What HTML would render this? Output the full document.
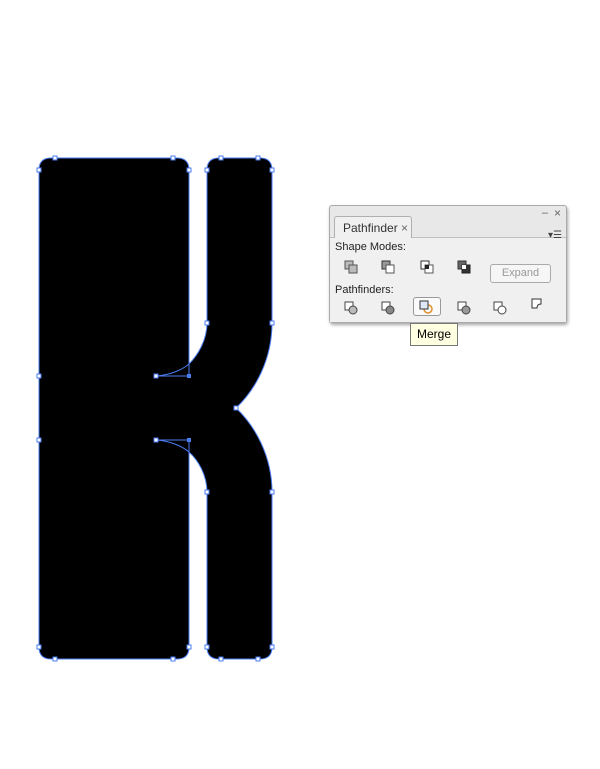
<!DOCTYPE html>
<html><head><style>
body{margin:0;width:600px;height:769px;background:#fff;position:relative;overflow:hidden;font-family:"Liberation Sans",sans-serif}
.panel{position:absolute;left:329px;top:205px;width:236px;height:116px;background:#e8e8e8;border:1px solid #aaa;border-radius:3px;box-shadow:1px 2px 3px rgba(0,0,0,.35)}
.tab{position:absolute;left:4px;top:10px;width:78px;height:22px;background:#f0f0f0;border:1px solid #b0b0b0;border-bottom:none;border-radius:3px 3px 0 0;font-size:12px;color:#333;line-height:22px;padding-left:8px;box-sizing:border-box}
.body{position:absolute;left:0;top:31px;right:0;bottom:0;background:#f0f0f0;border-top:1px solid #c0c0c0}
.lbl{position:absolute;left:5px;font-size:11px;color:#222}
.ic{position:absolute;width:14px;height:14px}
.btn{position:absolute;left:160px;top:26px;width:59px;height:17px;border:1px solid #aaa;border-radius:3px;background:#f6f6f6;font-size:11px;color:#999;text-align:center;line-height:17px}
.tip{position:absolute;left:410px;top:323px;width:46px;height:21px;background:#ffffe1;border:1px solid #777;font-size:12px;line-height:21px;text-align:center;color:#000}
</style></head><body>
<svg width="600" height="769" style="position:absolute;left:0;top:0">
<path d="M51,158 L177,158 Q189,158 189,170 L189,364 C198,355 207,340 207,323 L207,170 Q207,158 219,158 L260,158 Q272,158 272,170 L272,323 C272,360 255,390 236,408 C255,426 272,456 272,492 L272,647 Q272,659 260,659 L219,659 Q207,659 207,647 L207,492 C207,475 198,460 189,452 L189,647 Q189,659 177,659 L51,659 Q39,659 39,647 L39,170 Q39,158 51,158 Z" fill="#000" stroke="#4a7cf0" stroke-width="1"/>
<g stroke="#4a7cf0" stroke-width="1" fill="none">
<line x1="156" y1="376" x2="189" y2="376"/><line x1="189" y1="376" x2="189" y2="364"/><path d="M156,376 C170,375 182,370 189,364"/>
<line x1="156" y1="440" x2="189" y2="440"/><line x1="189" y1="440" x2="189" y2="452"/><path d="M156,440 C170,441 182,446 189,452"/>
</g>
<g fill="#fff" stroke="#4a7cf0" stroke-width="1">
<rect x="53" y="156" width="4" height="4"/><rect x="171" y="156" width="4" height="4"/><rect x="37" y="168" width="4" height="4"/><rect x="187" y="168" width="4" height="4"/>
<rect x="219" y="156" width="4" height="4"/><rect x="256" y="156" width="4" height="4"/><rect x="205" y="168" width="4" height="4"/><rect x="270" y="168" width="4" height="4"/>
<rect x="205" y="321" width="4" height="4"/><rect x="270" y="321" width="4" height="4"/><rect x="234" y="406" width="4" height="4"/>
<rect x="205" y="490" width="4" height="4"/><rect x="270" y="490" width="4" height="4"/>
<rect x="37" y="374" width="4" height="4"/><rect x="37" y="438" width="4" height="4"/>
<rect x="154" y="374" width="4" height="4"/><rect x="154" y="438" width="4" height="4"/>
<rect x="37" y="645" width="4" height="4"/><rect x="187" y="645" width="4" height="4"/><rect x="53" y="657" width="4" height="4"/><rect x="171" y="657" width="4" height="4"/>
<rect x="205" y="645" width="4" height="4"/><rect x="270" y="645" width="4" height="4"/><rect x="219" y="657" width="4" height="4"/><rect x="256" y="657" width="4" height="4"/>
</g>
<g fill="#4a7cf0"><rect x="187" y="374" width="4" height="4"/><rect x="187" y="438" width="4" height="4"/></g>
</svg>
<div class="panel">
<div style="position:absolute;right:18px;top:1px;font-size:11px;color:#666">–</div>
<div style="position:absolute;right:5px;top:0px;font-size:12px;color:#666">×</div>
<div class="body">
<div style="position:absolute;right:4px;top:-8px;font-size:10px;color:#444">▾☰</div>
<div class="lbl" style="top:3px">Shape Modes:</div>
<svg class="ic" style="left:14px;top:22px"><rect x="1" y="1" width="8" height="8" fill="#bbb" stroke="#555"/><rect x="5" y="5" width="8" height="8" fill="#bbb" stroke="#555"/></svg>
<svg class="ic" style="left:51px;top:22px"><rect x="1" y="1" width="8" height="8" fill="#999" stroke="#333"/><rect x="5" y="5" width="8" height="8" fill="#fff" stroke="#555"/></svg>
<svg class="ic" style="left:90px;top:22px"><rect x="1" y="1" width="8" height="8" fill="#fff" stroke="#333"/><rect x="5" y="5" width="8" height="8" fill="#fff" stroke="#555"/><rect x="5" y="5" width="4" height="4" fill="#222"/></svg>
<svg class="ic" style="left:127px;top:22px"><rect x="1" y="1" width="8" height="8" fill="#666" stroke="#333"/><rect x="5" y="5" width="8" height="8" fill="#333" stroke="#222"/><rect x="5" y="5" width="4" height="4" fill="#fff"/></svg>
<div class="btn">Expand</div>
<div class="lbl" style="top:46px">Pathfinders:</div>
<svg class="ic" style="left:14px;top:63px"><rect x="1" y="1" width="8" height="8" fill="#fff" stroke="#444"/><circle cx="9" cy="9" r="4" fill="#bbb" stroke="#444"/></svg>
<svg class="ic" style="left:51px;top:63px"><rect x="1" y="1" width="8" height="8" fill="#fff" stroke="#444"/><circle cx="9" cy="9" r="4" fill="#888" stroke="#444"/></svg>
<div style="position:absolute;left:83px;top:59px;width:26px;height:17px;border:1px solid #999;border-radius:3px;background:#fafafa"></div>
<svg class="ic" style="left:89px;top:62px"><circle cx="9" cy="9" r="4" fill="none" stroke="#e09030" stroke-width="1.5"/><rect x="1" y="1" width="8" height="8" fill="#dde8f8" stroke="#333"/></svg>
<svg class="ic" style="left:127px;top:63px"><rect x="1" y="1" width="8" height="8" fill="#fff" stroke="#444"/><circle cx="9" cy="9" r="4" fill="#999" stroke="#444"/></svg>
<svg class="ic" style="left:163px;top:63px"><rect x="1" y="1" width="8" height="8" fill="#fff" stroke="#444"/><circle cx="9" cy="9" r="4" fill="#fff" stroke="#444"/></svg>
<svg class="ic" style="left:201px;top:60px"><path d="M1,1 H10 V6 Q6,6 6,10 H1 Z" fill="#fff" stroke="#333"/></svg>
</div>
<div class="tab">Pathfinder <span style="color:#666">×</span></div>
</div>
<div class="tip">Merge</div>
</body></html>
